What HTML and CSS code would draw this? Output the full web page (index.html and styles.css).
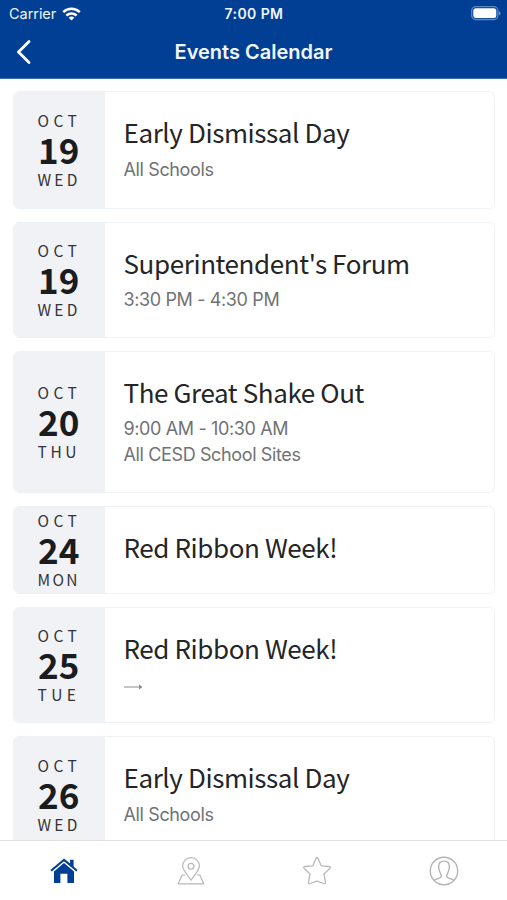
FILE: index.html
```html
<!DOCTYPE html>
<html lang="en">
<head>
<meta charset="utf-8">
<title>Events Calendar</title>
<link rel="stylesheet" href="styles.css">
</head>
<body>
<div class="app">
  <header class="header">
    <div class="status">
      <div class="carrier"><span>Carrier</span>
        <svg class="wifi" width="19" height="14" viewBox="0 0 19 14" fill="none" stroke="#fff" stroke-width="2.5"><path d="M1.2 5.2C6 .7 13 .7 17.8 5.2M4.3 8.5c3-2.7 7.4-2.7 10.4 0"/><path d="M6.7 10.7c1.6-1.5 4-1.5 5.6 0l-2.8 2.9z" fill="#fff" stroke="none"/></svg>
      </div>
      <div class="clock">7:00 PM</div>
      <div class="power"><svg width="30" height="15" viewBox="0 0 30 15"><rect x=".7" y=".7" width="26.2" height="12.8" rx="4" fill="none" stroke="#5f88c2" stroke-width="1.3"/><rect x="2.3" y="2.3" width="23" height="9.6" rx="2.5" fill="#fff"/><path d="M28 5v4.4c2-.8 2-3.600 0-4.400z" fill="#7096ca"/></svg></div>
    </div>
    <div class="nav">
      <svg class="back" width="16" height="24" viewBox="0 0 16 24" fill="none" stroke="#fff" stroke-width="2.8" stroke-linecap="round" stroke-linejoin="round"><path d="M13 1.600L2.500 12L13 22.400"/></svg>
      <h1>Events Calendar</h1>
    </div>
  </header>
  <main class="events">
    <article class="card h118">
      <div class="date"><span>OCT</span><b>19</b><span class="wed">WED</span></div>
      <div class="info"><h2>Early Dismissal Day</h2><p>All Schools</p></div>
    </article>
    <article class="card h116">
      <div class="date"><span>OCT</span><b>19</b><span class="wed">WED</span></div>
      <div class="info timed"><h2>Superintendent's Forum</h2><p>3:30 PM - 4:30 PM</p></div>
    </article>
    <article class="card h142">
      <div class="date"><span>OCT</span><b>20</b><span class="thu">THU</span></div>
      <div class="info timed"><h2>The Great Shake Out</h2><p>9:00 AM - 10:30 AM</p><p>All CESD School Sites</p></div>
    </article>
    <article class="card h88">
      <div class="date"><span>OCT</span><b>24</b><span class="mon">MON</span></div>
      <div class="info single"><h2>Red Ribbon Week!</h2></div>
    </article>
    <article class="card h116">
      <div class="date"><span>OCT</span><b>25</b><span class="tue">TUE</span></div>
      <div class="info ongoing"><h2>Red Ribbon Week!</h2><p class="arrow"><svg width="19" height="6" viewBox="0 0 19 6"><path d="M0 3h17" stroke="#8b8b8b"/><path d="M15 .6L18.500 3L15 5.400z" fill="#8b8b8b"/></svg></p></div>
    </article>
    <article class="card h118">
      <div class="date"><span>OCT</span><b>26</b><span class="wed">WED</span></div>
      <div class="info"><h2>Early Dismissal Day</h2><p>All Schools</p></div>
    </article>
  </main>
  <nav class="tabs">
    <a class="home"><svg width="28" height="26" viewBox="0 0 28 26" fill="#003f96"><path d="M14 .4L.4 12l1.300 1.500L14 3.200l12.300 10.300 1.300-1.500-4-3.500V1.800h-3.500v3.700z"/><path d="M14 5L4 13.400V25h6.400v-9.200h7V25H24V13.400z"/></svg></a>
    <a class="map"><svg width="28" height="28" viewBox="0 0 28 28" fill="none" stroke="#b8b8b8" stroke-width="1.200" stroke-linejoin="round"><path d="M14 23.300C11.500 18.500 5.600 14 5.600 9.100a8.400 8.400 0 0 1 16.800 0C22.400 14 16.500 18.500 14 23.300z"/><circle cx="14" cy="9.300" r="2.900"/><path d="M8.300 18H5.200L1.200 26.800h25.600L22.800 18h-3.100"/></svg></a>
    <a><svg width="28" height="28" viewBox="0 0 28 28" fill="none" stroke="#b8b8b8" stroke-width="1.300" stroke-linejoin="round"><path d="M12.900 1.500q1.100-1.500 2.200 0l3.200 7.400 8 .6q1.700.5.500 1.900l-5.900 5.500 1.700 8.400q-.1 1.800-1.800 1.200L14 24.200l-6.800 2.300q-1.700.6-1.800-1.200l1.700-8.400L1.200 11.400Q0 10 1.700 9.500l8-.6z"/></svg></a>
    <a><svg width="30" height="30" viewBox="0 0 30 30" fill="none" stroke="#b4b4b4" stroke-width="1.400"><circle cx="15" cy="15" r="13.700"/><path d="M5.200 24.500c1.800-2 7-2.200 7.200-4.500.1-1.800-2.800-3.700-2.800-9.200 0-3.900 2.100-5.700 5.400-5.700s5.400 1.800 5.400 5.700c0 5.500-2.900 7.400-2.800 9.200.2 2.300 5.400 2.500 7.200 4.500"/></svg></a>
  </nav>
</div>
</body>
</html>
```
FILE: styles.css
```css
* { box-sizing: border-box; margin: 0; padding: 0; }
body { background: #fff; font-family: Inter, "Liberation Sans", sans-serif; }
.app { height: 900px; display: flex; flex-direction: column; overflow: hidden; }
.header { flex: 0 0 79px; background: #003f94; color: #f2f6fc; border-bottom: 1px solid #3a6dae; }
.status { height: 27px; display: grid; grid-template-columns: 1fr 1fr 1fr; align-items: center; padding: 0 6px 0 9px; }
.carrier { display: flex; align-items: center; gap: 6px; font-size: 14.500px; letter-spacing: -.05px; }
.clock { text-align: center; font-size: 14px; font-weight: 600; letter-spacing: .4px; margin-left: -2px; }
.power { display: flex; justify-content: flex-end; }
.nav { height: 50px; display: grid; grid-template-columns: 40px 1fr 40px; align-items: center; padding: 0 16px; }
.nav h1 { text-align: center; font-size: 20px; font-weight: 600; letter-spacing: 0; }
.events { flex: 1 1 0; min-height: 0; overflow: hidden; padding: 12px 12px 0 13px; display: flex; flex-direction: column; gap: 13px; }
.card { flex: none; display: flex; border: 1px solid #eff2f4; border-radius: 6px; overflow: hidden; }
.h118 { height: 118px; }
.h116 { height: 116px; }
.h142 { height: 142px; }
.h88 { height: 88px; }
.date { flex: 0 0 91px; background: #f1f2f6; display: flex; flex-direction: column; align-items: flex-start; justify-content: center; padding: 0 0 2px 23.500px; font-family: "Noto Sans CJK SC", sans-serif; color: #333436; }
.date span { font-size: 15.500px; line-height: 22px; letter-spacing: 4.400px; }
.date .wed { letter-spacing: 3.200px; }
.date .thu { letter-spacing: 3.600px; }
.date .mon { letter-spacing: 2.300px; }
.date .tue { letter-spacing: 4.400px; }
.date b { font-size: 35px; line-height: 37px; margin: -1px 0 1px .5px; font-weight: 700; color: #1b1c1e; }
.info { flex: 1; display: flex; flex-direction: column; justify-content: center; padding: 0 0 4px 18.500px; }
.info h2 { font: 400 26px/36px "Noto Sans CJK SC", sans-serif; letter-spacing: -.4px; margin-bottom: 7px; color: #242527; white-space: nowrap; }
.info p { font-size: 18px; line-height: 26px; letter-spacing: -.37px; color: #707274; white-space: nowrap; }
.timed { padding-bottom: 2px; }
.timed h2 { margin-bottom: 6px; }
.single { padding-bottom: 0; }
.ongoing { padding-bottom: 10px; }
.ongoing h2 { margin-bottom: 14px; }
.info .arrow { display: flex; align-items: center; padding-top: 4px; }
.tabs { flex: 0 0 60px; border-top: 1px solid #dfdfdf; background: #fff; display: grid; grid-template-columns: repeat(4, 1fr); }
.tabs a { display: flex; align-items: center; justify-content: center; }
.tabs .home, .tabs .map { padding-left: 1px; }
```
